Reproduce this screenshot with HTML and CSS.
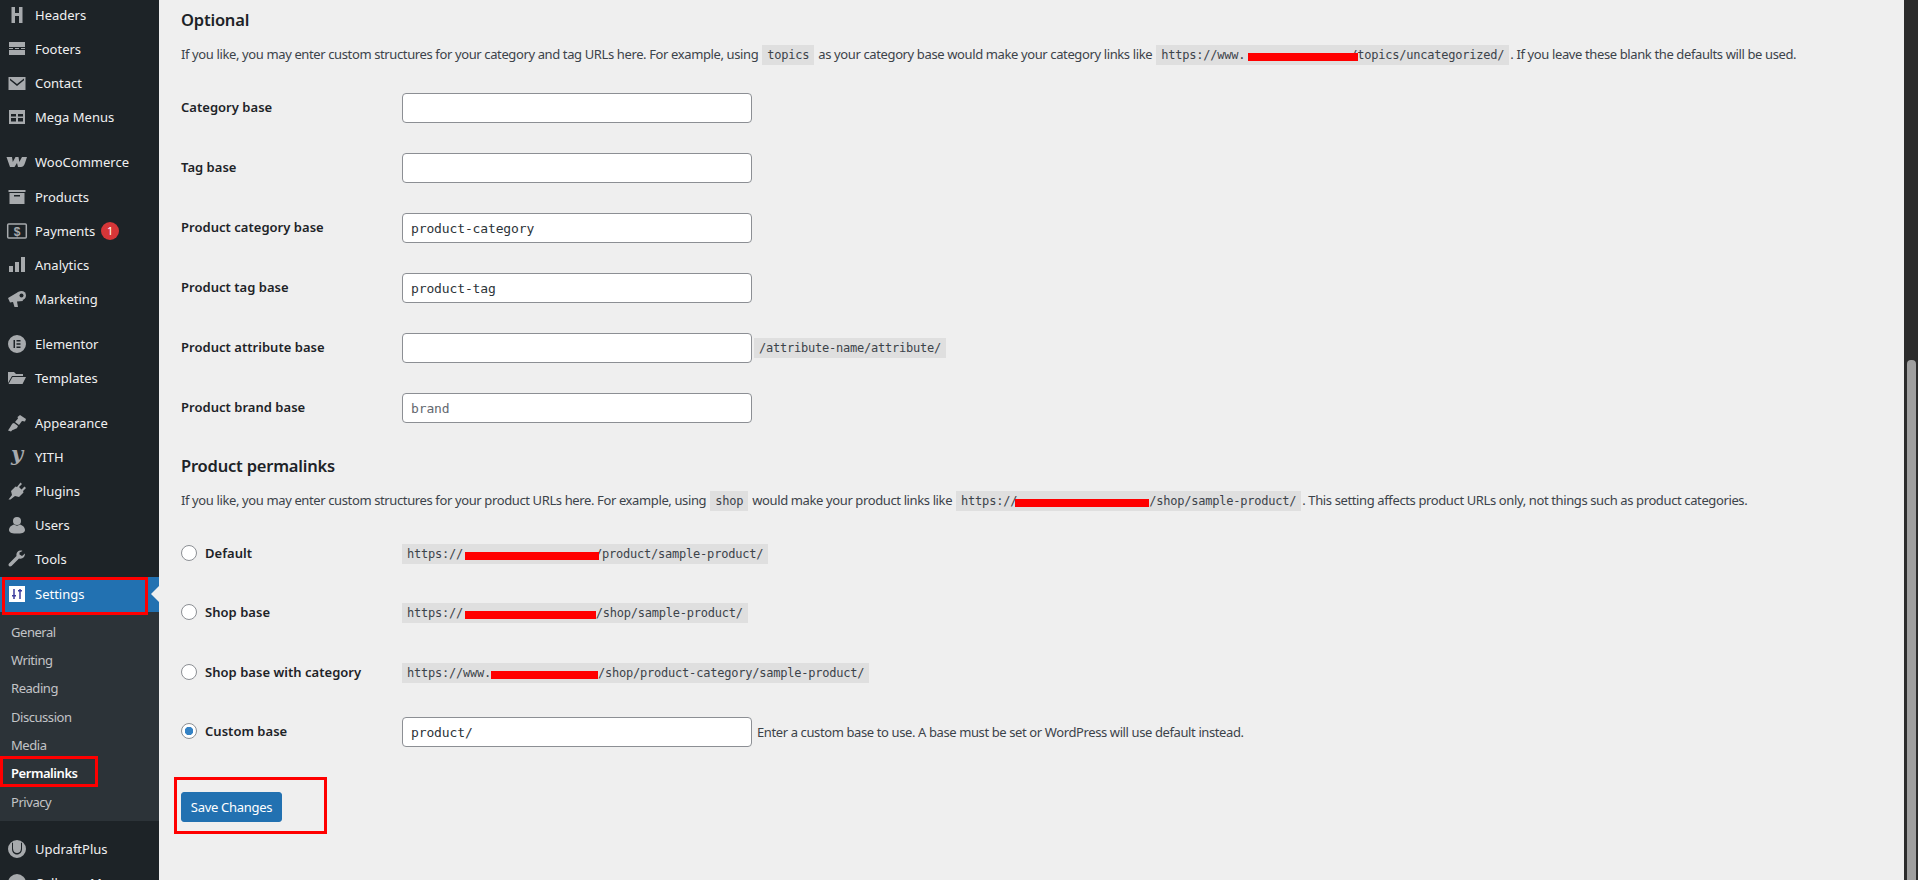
FILE: index.html
```html
<!DOCTYPE html>
<html lang="en">
<head>
    <meta charset="UTF-8">
    <title>Permalink Settings</title>
    <link rel="stylesheet" href="styles.css">
</head>
<body>
    <div class="page">
        <!-- Sidebar -->
        <nav class="sidebar">
            <ul class="menu">
                <li><svg class="icon" viewBox="0 0 20 20"><path d="M4.500 2h3.500v6h4V2h3.500v16H12v-7H8v7H4.500z"/></svg>Headers</li>
                <li><svg class="icon" viewBox="0 0 20 20"><path d="M2 3h16v5H2zM2 9h4v1H2zM8 9h4v1H8zM14 9h4v1h-4zM2 11h16v5H2z"/></svg>Footers</li>
                <li><svg class="icon" viewBox="0 0 20 20"><path d="M1.500 4h17v13h-17zM3 5.500 10 11l7-5.500v1.800L10 13 3 7.300z" fill-rule="evenodd"/></svg>Contact</li>
                <li><svg class="icon" viewBox="0 0 20 20"><path d="M2 3h16v14H2zM4 7v2.500h5V7zM11 7v2.500h5V7zM4 11v3.500h5V11zM11 11v3.500h5V11z" fill-rule="evenodd"/></svg>Mega Menus</li>
                <li class="sep"><svg class="icon" viewBox="0 0 20 20"><path d="M-.500 5h5.500l.800 5 2.700-5h3l.800 5 2.700-5h5l-2 6c-1 3-2.500 4-4 4h-3l-1-4-2.500 4H3z"/></svg>WooCommerce</li>
                <li><svg class="icon" viewBox="0 0 20 20"><path d="M1.500 3h17v2h-17zM2.500 6h15v11h-15zM7 8v1.500h6V8z" fill-rule="evenodd"/></svg>Products</li>
                <li><svg class="icon" viewBox="0 0 20 20"><rect x="0.700" y="3" width="18.600" height="14" rx="1" fill="none" stroke="#a7aaad" stroke-width="1.500"/><text x="10" y="14.500" text-anchor="middle" class="icon-dollar">$</text></svg>Payments<span class="badge">1</span></li>
                <li><svg class="icon" viewBox="0 0 20 20"><path d="M2 11h4v6H2zM8 7h4v10H8zM14 2h4v15h-4z"/></svg>Analytics</li>
                <li><svg class="icon" viewBox="0 0 20 20"><path d="M1 9l11-6.500 4 9.500-6 .5 1 5.500H7.500L6 13l-3 .5z"/><circle cx="14.500" cy="6.500" r="4.500"/><circle cx="14.500" cy="6.500" r="2" fill="#1d2327"/></svg>Marketing</li>
                <li class="sep"><svg class="icon" viewBox="0 0 20 20"><path d="M10 1a9 9 0 1 0 0 18 9 9 0 0 0 0-18zM6.500 6h1.500v8H6.500zM9.500 6h4v1.500h-4zM9.500 9.250h4v1.500h-4zM9.500 12.500h4V14h-4z" fill-rule="evenodd"/></svg>Elementor</li>
                <li><svg class="icon" viewBox="0 0 20 20"><path d="M1 4h6l2 2h7v2H5l-4 7zM5.500 9H19l-3.500 7H1.500z"/></svg>Templates</li>
                <li class="sep"><svg class="icon" viewBox="0 0 20 20"><path d="M13 2l6 4-1 2.500-3-.5L12 12 8 9l3-3.500-.5-1.500zM7 10l4 3-1 2c-1.500 1.500-4 1-6 3.500l-3-1C3 15 4 12 5.500 10.500z"/></svg>Appearance</li>
                <li><svg class="icon" viewBox="0 0 20 20"><text x="10" y="14" text-anchor="middle" class="icon-yith">y</text></svg>YITH</li>
                <li><svg class="icon" viewBox="0 0 20 20"><path d="M13.500 1.500 15 3l-3 3 2.500 2.500 3-3L19 7l-3 3 .5 1.500L12 16l-4-1-4.500 3.500H1.500L5 14l-1-4 4.500-4.500 1.500.5z"/></svg>Plugins</li>
                <li><svg class="icon" viewBox="0 0 20 20"><circle cx="10" cy="6" r="4"/><path d="M2 15c0-3 3-5 5-5.500 2 1.500 4 1.500 6 0 2 .5 5 2.500 5 5.500 0 3-4 3.500-8 3.500s-8-.5-8-3.500z"/></svg>Users</li>
                <li><svg class="icon" viewBox="0 0 20 20"><path d="M14 1.500c-3 0-5 2-4.500 5.500L2 14.500c-1.500 1.500.5 4 2.500 2.500L12 9.500c3.500 1 6-1.500 6-5l-3 2.500-2.500-1.500V3.500l3-1.500c-.5-.5-1-.5-1.500-.5z"/></svg>Tools</li>
                <li class="active"><svg class="icon" viewBox="0 0 20 20"><rect x="2" y="2" width="16" height="16" fill="#fff"/><path d="M7 5v10M13 5v10" stroke="#3d3d9e" stroke-width="1.500"/><path d="M5 11h4v1.500H5zM11 6h4v1.500h-4z" fill="#3d3d9e"/></svg>Settings</li>
            </ul>
            <ul class="submenu">
                <li>General</li>
                <li>Writing</li>
                <li>Reading</li>
                <li>Discussion</li>
                <li>Media</li>
                <li class="current">Permalinks</li>
                <li>Privacy</li>
            </ul>
            <ul class="menu menu-low">
                <li><svg class="icon" viewBox="0 0 20 20"><path d="M10 1a9 9 0 1 0 0 18 9 9 0 0 0 0-18zM6 3.500v6c0 6 8 6 8 0v-6l1 .5v6c0 3-2 5.500-5 5.500S5 13 5 10V4z" fill-rule="evenodd"/></svg>UpdraftPlus</li>
                <li><svg class="icon" viewBox="0 0 20 20"><circle cx="10" cy="10" r="9"/></svg>Collapse Menu</li>
            </ul>
            <span class="mark mark-settings"></span>
            <span class="mark mark-permalinks"></span>
        </nav>

        <!-- Contenido -->
        <main class="content">
            <h2 class="first">Optional</h2>
            <p>If you like, you may enter custom structures for your category and tag URLs here. For example, using <code>topics</code> as your category base would make your category links like <code>https://www.<span class="redact r-topics"></span>/topics/uncategorized/</code>. If you leave these blank the defaults will be used.</p>

            <div class="rows">
                <div class="row"><label>Category base</label><input type="text"></div>
                <div class="row"><label>Tag base</label><input type="text"></div>
                <div class="row"><label>Product category base</label><input type="text" value="product-category"></div>
                <div class="row"><label>Product tag base</label><input type="text" value="product-tag"></div>
                <div class="row"><label>Product attribute base</label><input type="text"><code class="after">/attribute-name/attribute/</code></div>
                <div class="row"><label>Product brand base</label><input type="text" placeholder="brand"></div>
            </div>

            <h2>Product permalinks</h2>
            <p>If you like, you may enter custom structures for your product URLs here. For example, using <code>shop</code> would make your product links like <code>https://<span class="redact r-product"></span>/shop/sample-product/</code>. This setting affects product URLs only, not things such as product categories.</p>

            <div class="rows rows-radio">
                <div class="row"><label><span class="radio"></span>Default</label><code>https://<span class="redact r-default"></span>/product/sample-product/</code></div>
                <div class="row"><label><span class="radio"></span>Shop base</label><code>https://<span class="redact r-shop"></span>/shop/sample-product/</code></div>
                <div class="row"><label><span class="radio"></span>Shop base with category</label><code>https://www.<span class="redact r-cat"></span>/shop/product-category/sample-product/</code></div>
                <div class="row"><label><span class="radio checked"></span>Custom base</label><input type="text" value="product/"><span class="hint">Enter a custom base to use. A base must be set or WordPress will use default instead.</span></div>
            </div>

            <div class="submit">
                <button type="button">Save Changes</button>
                <span class="mark mark-save"></span>
            </div>
        </main>

        <div class="scrollbar"><div class="thumb"></div></div>
    </div>
</body>
</html>
```

FILE: styles.css
```css
html, body {
    margin: 0;
    height: 100%;
    overflow: hidden;
}

body {
    font-family: "Noto Sans", sans-serif;
    font-size: 13px;
    color: #3c434a;
    background-color: #efefef;
}

ul {
    list-style: none;
    margin: 0;
    padding: 0;
}

.page {
    display: flex;
    height: 880px;
    overflow: hidden;
}

/* Sidebar */
.sidebar {
    position: relative;
    width: 159px;
    flex-shrink: 0;
    background-color: #1d2327;
    color: #f0f0f1;
}

.menu {
    margin-top: -2px;
}

.menu li {
    display: flex;
    align-items: center;
    height: 34.1px;
    padding-left: 7px;
}

.menu .sep {
    margin-top: 11px;
}

.icon {
    width: 20px;
    height: 20px;
    margin-right: 8px;
    flex-shrink: 0;
    fill: #a7aaad;
    overflow: visible;
}

.icon-dollar {
    font-family: "Liberation Sans", sans-serif;
    font-size: 12px;
    font-weight: 700;
}

.icon-yith {
    font-family: "DejaVu Serif", serif;
    font-size: 21px;
    font-weight: 700;
    font-style: italic;
}

.badge {
    width: 18px;
    height: 18px;
    margin-left: 6px;
    border-radius: 50%;
    background-color: #d63638;
    color: #fff;
    font-size: 11px;
    line-height: 18px;
    text-align: center;
}

.menu .active {
    position: relative;
    box-sizing: border-box;
    height: 35.400px;
    padding-bottom: 1px;
    background-color: #2271b1;
    color: #fff;
}

.menu .active::after {
    content: "";
    position: absolute;
    right: 0;
    top: 9px;
    border: 8px solid transparent;
    border-right-color: #efefef;
    border-left-width: 0;
}

.submenu {
    padding: 6px 0 5.200px;
    background-color: #2c3338;
    color: #c3c4c7;
    letter-spacing: -0.45px;
}

.submenu li {
    height: 28.3px;
    line-height: 28px;
    padding-left: 11px;
}

.submenu .current {
    color: #fff;
    font-weight: 600;
}

.menu-low {
    margin-top: 11px;
}

/* Contenido */
.content {
    flex: 1;
    min-width: 0;
    padding-left: 22px;
}

h2 {
    margin: 0;
    color: #1d2327;
    font-size: 16.500px;
    font-weight: 600;
    letter-spacing: -0.2px;
    line-height: 24px;
    padding-top: 31px;
}

h2.first {
    padding-top: 8px;
}

p {
    margin: 12px 0 0;
    line-height: 20px;
    white-space: nowrap;
    letter-spacing: -0.38px;
}

code {
    display: inline-block;
    padding: 0 5px;
    margin: 0 1px;
    height: 20px;
    line-height: 20px;
    background-color: #dfdfdf;
    color: #3c434a;
    font-family: "DejaVu Sans Mono", monospace;
    font-size: 12px;
    letter-spacing: -0.22px;
    white-space: nowrap;
}

.redact {
    display: inline-block;
    position: relative;
    z-index: 1;
    height: 8px;
    background-color: #ff0000;
    vertical-align: -2px;
}

.r-topics { width: 109.500px; margin: 0 -7.500px 0 3px; }
.r-product { width: 133.500px; margin: 0 0.500px 0 -2px; }
.r-default { width: 134px; margin: 0 -4px 0 2px; }
.r-shop { width: 131px; margin: 0 -0.400px 0 2px; }
.r-cat { width: 107px; }

.rows {
    padding-top: 28px;
    display: flex;
    flex-direction: column;
    gap: 30px;
}

.rows-radio {
    padding-top: 27.500px;
    gap: 29.500px;
}

.row {
    display: flex;
    align-items: center;
    height: 30px;
}

.row label {
    display: flex;
    align-items: center;
    width: 221px;
    padding-bottom: 2px;
    flex-shrink: 0;
    color: #1d2327;
    font-weight: 600;
    letter-spacing: 0.03px;
}

.row code {
    margin: 0;
}

.row .after {
    margin-left: 2px;
}

input {
    box-sizing: border-box;
    width: 350px;
    height: 30px;
    padding: 0 8px;
    background-color: #fff;
    border: 1px solid #8c8f94;
    border-radius: 4px;
    color: #2c3338;
    font-family: "DejaVu Sans Mono", monospace;
    font-size: 13px;
    letter-spacing: -0.13px;
}

input::placeholder {
    color: #646970;
}

.radio {
    box-sizing: border-box;
    width: 16px;
    height: 16px;
    margin-right: 8px;
    border: 1px solid #8c8f94;
    border-radius: 50%;
    background-color: #fff;
}

.radio.checked {
    background: radial-gradient(circle, #3582c4 0 4px, #fff 4.500px);
}

.hint {
    margin-left: 5px;
    letter-spacing: -0.39px;
}

.submit {
    position: relative;
    padding-top: 45px;
}

button {
    display: block;
    width: 101px;
    height: 30px;
    padding: 0;
    background-color: #2271b1;
    border: 1px solid #2271b1;
    border-radius: 3px;
    color: #fff;
    font-family: "Noto Sans", sans-serif;
    font-size: 13px;
    letter-spacing: -0.3px;
}

/* Marcas rojas de la captura */
.mark {
    position: absolute;
    box-sizing: border-box;
    border: 3px solid #ff0000;
    pointer-events: none;
}

.mark-settings {
    left: 2px;
    top: 577px;
    width: 146px;
    height: 38px;
}

.mark-permalinks {
    left: 0;
    top: 756px;
    width: 98px;
    height: 31px;
}

.mark-save {
    left: -7px;
    top: 30px;
    width: 153px;
    height: 57px;
}

/* Barra de desplazamiento */
.scrollbar {
    display: flex;
    align-items: flex-end;
    justify-content: center;
    width: 14px;
    flex-shrink: 0;
    background-color: #2b2b2b;
}

.thumb {
    width: 9px;
    height: 520px;
    background-color: #9f9f9f;
    border-radius: 4px 4px 0 0;
}
```
